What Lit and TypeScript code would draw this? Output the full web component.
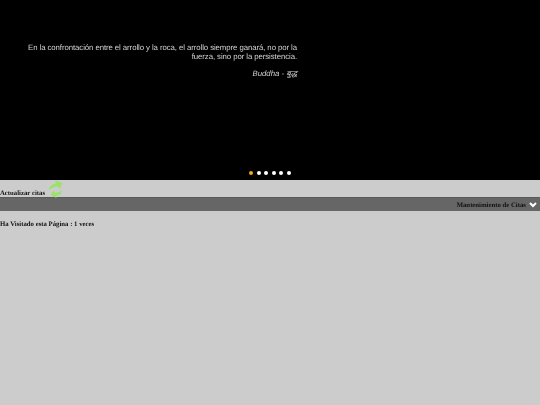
import { LitElement, html, css } from "lit";
import { customElement } from "lit/decorators.js";

@customElement("app-root")
export class AppRoot extends LitElement {
  static styles = css`
    :host { display: block; width: 540px; height: 405px; background: #cccccc; font-family: "Liberation Serif", serif; overflow: hidden; text-rendering: geometricPrecision; }
    .hero { height: 180px; background: #000; display: flex; flex-direction: column; box-sizing: border-box; padding: 43px 243px 0 27px; position: relative; }
    .quote { font: 7.8px/9px "Liberation Sans", Arial, sans-serif; letter-spacing: -0.08px; color: #d4d4d4; text-align: right; margin: 0; will-change: opacity; }
    .author { font: italic 7.8px/10px "Liberation Sans", Arial, sans-serif; color: #d4d4d4; text-align: right; margin: 8px 0 0; will-change: opacity; }
    .dots { position: absolute; left: 249px; top: 171px; display: flex; gap: 3.6px; }
    .dot { width: 4px; height: 4px; border-radius: 50%; background: #fff; }
    .dot.on { background: #f5a623; }
    .refresh { height: 17px; display: flex; align-items: flex-end; gap: 4px; font-size: 6.75px; font-weight: bold; color: #111; line-height: 9px; }
    .refresh span { will-change: opacity; margin-bottom: -1px; }
    .refresh svg { width: 14px; height: 18px; margin-bottom: -1px; flex: none; filter: blur(0.4px); }
    .bar { height: 14px; background: #666; border-top: 1px solid #5a5a5a; box-sizing: border-box; display: flex; justify-content: flex-end; align-items: center; gap: 3px; padding-right: 3px; font-size: 6.75px; font-weight: bold; color: #111; }
    .bar span { will-change: opacity; padding-top: 2px; }
    .bar svg { width: 8px; height: 6px; flex: none; }
    .visits { margin: 9px 0 0; font-size: 6.75px; line-height: 9px; font-weight: bold; color: #111; will-change: opacity; }
  `;
  render() {
    return html`
      <div class="hero">
        <p class="quote">En la confrontación entre el arrollo y la roca, el arrollo siempre ganará, no por la fuerza, sino por la persistencia.</p>
        <p class="author">Buddha - बुद्ध</p>
        <div class="dots">
          <span class="dot on"></span><span class="dot"></span><span class="dot"></span><span class="dot"></span><span class="dot"></span><span class="dot"></span>
        </div>
      </div>
      <div class="refresh">
        <span>Actualizar citas</span>
        <svg viewBox="0 0 14 18"><path fill="#9ae36b" d="M0 10 C0.5 6 3 4 7 3.5 L6 0.5 L13.5 3 L10.5 9 L9 6.5 C6 6.5 3 8 0 10Z M13 10.5 C12.5 14 10 15.5 7 16 L7.5 18 L1.5 15 L4.5 10.5 L5.5 12.5 C8 12.5 10.5 12 13 10.5Z"/></svg>
      </div>
      <div class="bar">
        <span>Mantenimiento de Citas</span>
        <svg viewBox="0 0 8 6"><path d="M1 1 L4 4 L7 1" fill="none" stroke="#fff" stroke-width="2"/></svg>
      </div>
      <p class="visits">Ha Visitado esta Página : 1 veces</p>
    `;
  }
}
